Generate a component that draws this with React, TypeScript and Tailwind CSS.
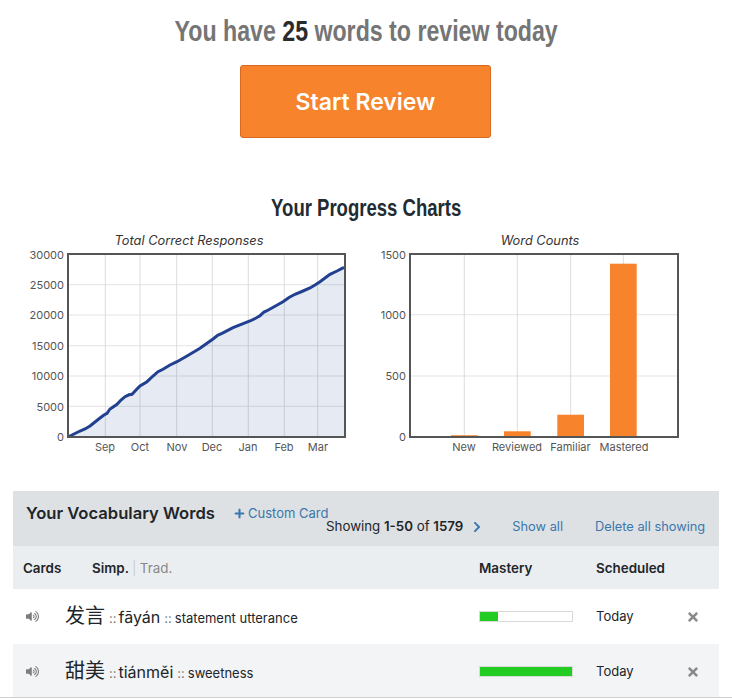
import { FaChevronRight, FaPlus, FaTimes, FaVolumeUp } from "react-icons/fa";

const heading = "inline-block scale-x-[0.772] font-['Liberation_Sans',sans-serif] font-bold";
const linePts: [number, number][] = [
  [68, 437], [74, 434], [80, 431], [85, 429], [90, 426], [95, 422], [100, 418], [104, 415], [107, 413.3], [110, 409], [112, 407.7], [117, 404.3], [121, 400], [125, 396.7], [129, 394.8], [132, 394.3], [136, 390], [140, 386],
  [147, 381.7], [153, 376], [158, 371.7], [163, 369.3], [170, 365], [177, 361.7], [187, 356], [200, 348.3], [213, 339], [218, 335], [222, 333.3], [233, 327.7],
  [250, 321], [256, 318], [260, 315.7], [264, 312], [267, 310.7], [283, 301.7], [289, 297.5], [295, 294.3], [303, 291], [310, 288], [315, 285], [320, 281.7], [325, 278], [330, 274.3], [337, 271], [344, 267.3],
];
const linePath = linePts.map((p) => p.join(",")).join(" ");

const axisText = "font-['Inter',sans-serif] text-[11px] fill-[#555]";

function LineChart() {
  return (
    <svg width="366" height="232" viewBox="0 225 366 232" className="shrink-0">
      <text x="189" y="244.5" textAnchor="middle" className="font-['Inter',sans-serif] text-[12.8px] italic fill-[#333]">Total Correct Responses</text>
      {[284.7, 315, 345.7, 376, 406.3].map((y) => <line key={y} x1="68" x2="345" y1={y} y2={y} stroke="#e3e3e3" />)}
      {[105.3, 140, 176.7, 212.3, 248.3, 284.3, 317.7].map((x) => <line key={x} x1={x} x2={x} y1="254" y2="437" stroke="#dcdcdc" />)}
      <polygon points={`${linePath} 344,437`} fill="#1e3f94" fillOpacity="0.11" />
      <polyline points={linePath} fill="none" stroke="#21408f" strokeWidth="3" />
      <rect x="68" y="254" width="277" height="183" fill="none" stroke="#555" strokeWidth="2" />
      {[["30000", 259], ["25000", 289], ["20000", 319], ["15000", 350], ["10000", 380], ["5000", 411], ["0", 441]].map(([t, y]) => (
        <text key={t} x="64" y={y} textAnchor="end" className={axisText}>{t}</text>
      ))}
      {[["Sep", 105], ["Oct", 140], ["Nov", 177], ["Dec", 212], ["Jan", 248], ["Feb", 284], ["Mar", 318]].map(([t, x]) => (
        <text key={t} x={x} y="451" textAnchor="middle" className={axisText}>{t}</text>
      ))}
    </svg>
  );
}

function BarChart() {
  return (
    <svg width="366" height="232" viewBox="366 225 366 232" className="shrink-0">
      <text x="540" y="244.5" textAnchor="middle" className="font-['Inter',sans-serif] text-[12.8px] italic fill-[#333]">Word Counts</text>
      {[314.7, 376].map((y) => <line key={y} x1="410" x2="678" y1={y} y2={y} stroke="#e3e3e3" />)}
      {[464.3, 517.3, 570.7, 623.3].map((x) => <line key={x} x1={x} x2={x} y1="254" y2="437" stroke="#dcdcdc" />)}
      {[[451, 435.2], [504, 431.3], [557.3, 414.7], [610, 263.7]].map(([x, y]) => (
        <rect key={x} x={x} y={y} width="26.7" height={437 - y} fill="#f7832c" />
      ))}
      <rect x="410" y="254" width="268" height="183" fill="none" stroke="#555" strokeWidth="2" />
      {[["1500", 259], ["1000", 319], ["500", 380], ["0", 441]].map(([t, y]) => (
        <text key={t} x="406" y={y} textAnchor="end" className={axisText}>{t}</text>
      ))}
      {[["New", 464], ["Reviewed", 517], ["Familiar", 570.5], ["Mastered", 624]].map(([t, x]) => (
        <text key={t} x={x} y="451" textAnchor="middle" className={axisText}>{t}</text>
      ))}
    </svg>
  );
}

function Row({ zh, py, en, pct, bg, h }: { zh: string; py: string; en: string; pct: string; bg: string; h: string }) {
  return (
    <div className={`flex items-center ${bg} ${h}`}>
      <div className="w-[52px] pl-[13px] shrink-0 text-[#7d7d7d]"><FaVolumeUp size={13} /></div>
      <div className="w-[414px] shrink-0 flex items-baseline text-[#212529] whitespace-nowrap pt-[1px]">
        <span className="text-[20px] leading-none font-['Noto_Sans_CJK_SC',sans-serif]">{zh}</span>
        <span className="text-[13px] text-[#777] ml-[4px] mr-[2px]">::</span>
        <span className="text-[16px] leading-none">{py}</span>
        <span className="text-[13px] text-[#777] ml-[4px] mr-[3px]">::</span>
        <span className="text-[13px] leading-none">{en}</span>
      </div>
      <div className="w-[117px] shrink-0 -mt-[1px]">
        <div className="w-[94px] h-[11px] border border-[#d9d9d9] bg-white">
          <div className={`h-full bg-[#22cc22] ${pct}`} />
        </div>
      </div>
      <div className="w-[90px] shrink-0 text-[13px] pl-0 text-[#212529]">Today</div>
      <div className="text-[#8a8a8a]"><FaTimes size={14} /></div>
    </div>
  );
}

export default function App() {
  return (
    <div className="w-[732px] h-[700px] overflow-hidden bg-white font-['Inter',sans-serif]">
      <div className="pt-[12px] h-[65px] text-center">
        <h1 className={`${heading} text-[30px] leading-[38px] text-[#757575] whitespace-nowrap`}>
          You have <span className="text-[#2b2b2b]">25</span> words to review today
        </h1>
      </div>
      <div className="flex justify-center pr-[1px]">
        <button className="w-[251px] h-[73px] pt-[1px] rounded-[3px] border border-[#d9691f] bg-[#f7832c] text-white text-[23px] font-semibold font-['Inter',sans-serif]">Start Review</button>
      </div>
      <div className="mt-[55px] h-[32px] text-center">
        <h2 className={`${heading} text-[24px] leading-[30px] text-[#212b31] whitespace-nowrap`}>Your Progress Charts</h2>
      </div>
      <div className="flex h-[266px] items-start">
        <LineChart />
        <BarChart />
      </div>
      <div className="ml-[13px] w-[706px]">
        <div className="h-[55px] bg-[#dee1e4] relative flex items-start">
          <div className="pl-[13px] pt-[11px] w-[221px] shrink-0 text-[16.6px] leading-[22px] font-semibold text-[#212529] whitespace-nowrap">Your Vocabulary Words</div>
          <a className="pt-[13px] flex items-center gap-[3px] text-[13px] leading-[18px] text-[#3a77ad] whitespace-nowrap"><FaPlus size={11} />Custom Card</a>
          <div className="absolute left-[313px] top-[27px] flex items-center whitespace-nowrap text-[13.3px] leading-[17px] text-[#212529]">
            <span>Showing <b className="font-semibold">1-50</b> of <b className="font-semibold">1579</b></span>
            <FaChevronRight size={12} className="ml-[8px] text-[#3a77ad]" />
            <a className="ml-[29px] text-[12.8px] text-[#3a77ad]">Show all</a>
            <a className="ml-[32px] text-[12.8px] text-[#3a77ad]">Delete all showing</a>
          </div>
        </div>
        <div className="h-[43px] pt-[2px] bg-[#ebeef1] flex items-center text-[13.4px] font-semibold text-[#212529]">
          <div className="w-[79px] pl-[10px] shrink-0">Cards</div>
          <div className="w-[387px] shrink-0">Simp. <span className="font-normal text-[#ccc]">|</span> <span className="font-normal text-[#888]">Trad.</span></div>
          <div className="w-[117px] shrink-0">Mastery</div>
          <div>Scheduled</div>
        </div>
        <Row zh="发言" py="fāyán" en="statement utterance" pct="w-[20%]" bg="bg-white" h="h-[55px]" />
        <Row zh="甜美" py="tiánměi" en="sweetness" pct="w-full" bg="bg-[#f3f4f6]" h="h-[53px] pt-[2px]" />
      </div>
      <div className="border-t border-[#cfcfcf]" />
    </div>
  );
}
